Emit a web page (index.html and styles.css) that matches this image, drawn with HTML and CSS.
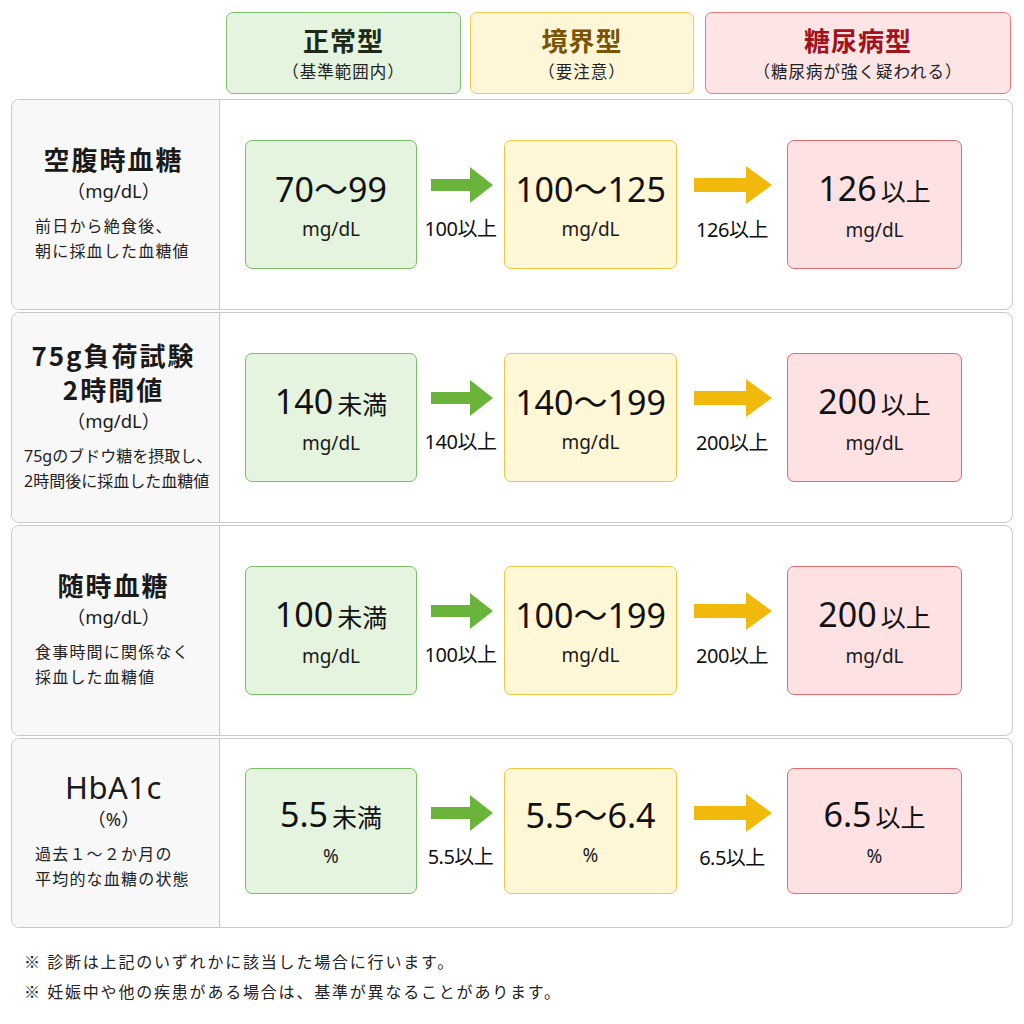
FILE: index.html
```html
<!DOCTYPE html>
<html lang="ja">
<head>
<meta charset="utf-8">
<link rel="stylesheet" href="styles.css">
</head>
<body>
<div class="page">
  <div class="heads">
    <div class="head head-g"><div class="ht">正常型</div><div class="hs">（基準範囲内）</div></div>
    <div class="head head-y"><div class="ht">境界型</div><div class="hs">（要注意）</div></div>
    <div class="head head-r"><div class="ht">糖尿病型</div><div class="hs">（糖尿病が強く疑われる）</div></div>
  </div>

  <div class="row">
    <div class="label">
      <div class="lt">空腹時血糖</div>
      <div class="lu">（mg/dL）</div>
      <div class="ld">前日から絶食後、<br>朝に採血した血糖値</div>
    </div>
    <div class="vals">
      <div class="box box-g"><div class="v">70～99</div><div class="u">mg/dL</div></div>
      <div class="arr arr-g"><svg width="62" height="36" viewBox="0 0 62 36"><path d="M0 12H39V0L62 18L39 36V24H0Z" fill="#6ab43c"/></svg><span>100以上</span></div>
      <div class="box box-y"><div class="v">100～125</div><div class="u">mg/dL</div></div>
      <div class="arr arr-y"><svg width="78" height="38" viewBox="0 0 78 38"><path d="M0 12H52V0L78 19L52 38V26H0Z" fill="#f0b90c"/></svg><span>126以上</span></div>
      <div class="box box-r"><div class="v">126<small>以上</small></div><div class="u">mg/dL</div></div>
    </div>
  </div>

  <div class="row">
    <div class="label">
      <div class="lt">75g負荷試験<br>2時間値</div>
      <div class="lu">（mg/dL）</div>
      <div class="ld ld-sm">75gのブドウ糖を摂取し、<br>2時間後に採血した血糖値</div>
    </div>
    <div class="vals">
      <div class="box box-g"><div class="v">140<small>未満</small></div><div class="u">mg/dL</div></div>
      <div class="arr arr-g"><svg width="62" height="36" viewBox="0 0 62 36"><path d="M0 12H39V0L62 18L39 36V24H0Z" fill="#6ab43c"/></svg><span>140以上</span></div>
      <div class="box box-y"><div class="v">140～199</div><div class="u">mg/dL</div></div>
      <div class="arr arr-y"><svg width="78" height="38" viewBox="0 0 78 38"><path d="M0 12H52V0L78 19L52 38V26H0Z" fill="#f0b90c"/></svg><span>200以上</span></div>
      <div class="box box-r"><div class="v">200<small>以上</small></div><div class="u">mg/dL</div></div>
    </div>
  </div>

  <div class="row">
    <div class="label">
      <div class="lt">随時血糖</div>
      <div class="lu">（mg/dL）</div>
      <div class="ld">食事時間に関係なく<br>採血した血糖値</div>
    </div>
    <div class="vals">
      <div class="box box-g"><div class="v">100<small>未満</small></div><div class="u">mg/dL</div></div>
      <div class="arr arr-g"><svg width="62" height="36" viewBox="0 0 62 36"><path d="M0 12H39V0L62 18L39 36V24H0Z" fill="#6ab43c"/></svg><span>100以上</span></div>
      <div class="box box-y"><div class="v">100～199</div><div class="u">mg/dL</div></div>
      <div class="arr arr-y"><svg width="78" height="38" viewBox="0 0 78 38"><path d="M0 12H52V0L78 19L52 38V26H0Z" fill="#f0b90c"/></svg><span>200以上</span></div>
      <div class="box box-r"><div class="v">200<small>以上</small></div><div class="u">mg/dL</div></div>
    </div>
  </div>

  <div class="row row-last">
    <div class="label">
      <div class="lt lt-en">HbA1c</div>
      <div class="lu">（%）</div>
      <div class="ld">過去１～２か月の<br>平均的な血糖の状態</div>
    </div>
    <div class="vals">
      <div class="box box-g"><div class="v">5.5<small>未満</small></div><div class="u">%</div></div>
      <div class="arr arr-g"><svg width="62" height="36" viewBox="0 0 62 36"><path d="M0 12H39V0L62 18L39 36V24H0Z" fill="#6ab43c"/></svg><span>5.5以上</span></div>
      <div class="box box-y"><div class="v">5.5～6.4</div><div class="u">%</div></div>
      <div class="arr arr-y"><svg width="78" height="38" viewBox="0 0 78 38"><path d="M0 12H52V0L78 19L52 38V26H0Z" fill="#f0b90c"/></svg><span>6.5以上</span></div>
      <div class="box box-r"><div class="v">6.5<small>以上</small></div><div class="u">%</div></div>
    </div>
  </div>

  <div class="notes">
    <p>※ 診断は上記のいずれかに該当した場合に行います。</p>
    <p>※ 妊娠中や他の疾患がある場合は、基準が異なることがあります。</p>
  </div>
</div>
</body>
</html>
```

FILE: styles.css
```css
* { box-sizing: border-box; }
html, body { margin: 0; padding: 0; background: #ffffff; }
body {
  font-family: "Noto Sans", "Noto Sans CJK JP", sans-serif;
  color: #1a1a1a;
}
.page { width: 1024px; height: 1024px; padding: 12px 11px 0 11px; }

.heads { display: flex; margin-left: 215px; gap: 9px; height: 82px; margin-bottom: 5px; }
.head {
  border: 1.5px solid; border-radius: 7px;
  display: flex; flex-direction: column; align-items: center; justify-content: center;
}
.ht { font-size: 26px; font-weight: 700; line-height: 32px; letter-spacing: 1px; font-family: "Noto Sans CJK JP", sans-serif; }
.hs { font-size: 16.5px; line-height: 22px; margin-top: 4px; letter-spacing: 1px; font-family: "Noto Sans CJK JP", sans-serif; color: #222; }
.head-g { width: 235px; background: #e4f4df; border-color: #7cc26b; }
.head-g .ht { color: #1c2a18; }
.head-y { width: 224px; background: #fff6d8; border-color: #f3c94f; }
.head-y .ht { color: #7a5304; }
.head-r { width: 306px; margin-left: 2px; background: #fde4e5; border-color: #e77b7d; }
.head-r .ht { color: #a3121c; }

.row {
  display: flex; height: 211px; margin-bottom: 2px;
  border: 1px solid #c9c9c9; border-radius: 8px; background: #fff; overflow: hidden;
}
.row-last { height: 190px; }
.label {
  width: 208px; flex: none; background: #f8f8f8; border-right: 1px solid #c9c9c9;
  display: flex; flex-direction: column; justify-content: center; padding: 0 0 4px 23px;
}
.lt {
  font-family: "Noto Sans CJK JP", sans-serif; font-weight: 700; font-size: 26px; line-height: 34px;
  text-align: center; margin-left: -27px; letter-spacing: 2px;
}
.lt-en { font-family: "Noto Sans", sans-serif; font-weight: 400; font-size: 31px; letter-spacing: 0.5px; }
.lu { font-size: 18.5px; line-height: 26px; text-align: center; margin-left: -27px; margin-top: 2px; font-family: "Noto Sans", "Noto Sans CJK JP", sans-serif; }
.ld { font-size: 16px; line-height: 25px; margin-top: 10px; letter-spacing: 1.2px; font-family: "Noto Sans", "Noto Sans CJK JP", sans-serif; color: #222; }
.ld-sm { margin-left: -11px; letter-spacing: 0; }

.vals { flex: 1; display: flex; align-items: center; padding-left: 25px; }
.box {
  height: 129px; border: 1.5px solid; border-radius: 7px;
  display: flex; flex-direction: column; align-items: center; justify-content: center;
}
.row-last .box { height: 126px; margin-top: -5px; }
.box-g { width: 172px; background: #e4f4df; border-color: #79bf68; }
.box-y { width: 173px; background: #fff7d6; border-color: #f1c546; }
.box-r { width: 175px; background: #fde1e3; border-color: #e46c70; }
.v { font-size: 34px; line-height: 42px; color: #111; }
.v small { font-family: "Noto Sans CJK JP", sans-serif; font-size: 25px; margin-left: 4px; }
.u { font-size: 19px; line-height: 26px; margin-top: 6px; }

.arr { display: flex; flex-direction: column; align-items: center; }
.arr span { font-size: 20px; line-height: 26px; margin-top: 13px; color: #111; letter-spacing: -0.5px; }
.arr-g { width: 87px; }
.arr-g svg { margin-left: 2px; }
.arr-y { width: 110px; }
.arr-y svg { margin-left: 2px; }
.row-last .arr { margin-top: -2px; }

.notes { padding: 16px 0 0 13px; }
.notes p { margin: 0; font-size: 16px; line-height: 30px; letter-spacing: 1.8px; font-family: "Noto Sans CJK JP", sans-serif; color: #222; }
```
